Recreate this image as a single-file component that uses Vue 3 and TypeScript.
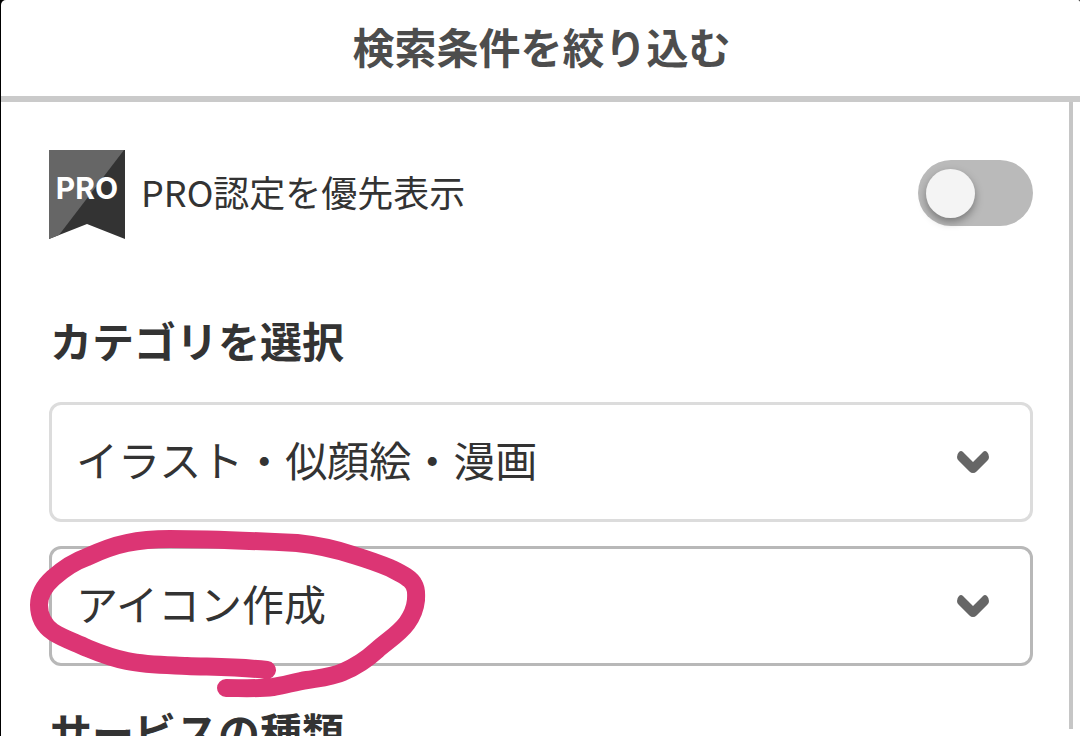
<script setup lang="ts">
import { ref } from 'vue'

interface Field {
  id: string
  label: string
  options: string[]
  active: boolean
}

const proFirst = ref(false)
const fields: Field[] = [
  { id: 'category', label: 'カテゴリ', options: ['イラスト・似顔絵・漫画'], active: false },
  { id: 'subcategory', label: 'サブカテゴリ', options: ['アイコン作成'], active: true },
]
</script>

<template>
  <div class="screen">
    <div class="dialog">
      <header class="header">
        <h1 class="title">検索条件を絞り込む</h1>
      </header>
      <div class="body">
        <main class="content">
          <div class="pro-row">
            <svg class="badge" viewBox="0 0 76 89" aria-hidden="true">
              <path d="M0 0H76V89L38 74L0 89Z" fill="#333" />
              <path d="M0 0H75L10 85L0 89Z" fill="#666" />
              <text x="38" y="49" text-anchor="middle" class="badge-text">PRO</text>
            </svg>
            <label class="pro-label" for="pro-first">PRO認定を優先表示</label>
            <input id="pro-first" v-model="proFirst" class="toggle" type="checkbox" role="switch" />
          </div>

          <h2 class="heading">カテゴリを選択</h2>
          <div class="fields">
            <div v-for="field in fields" :key="field.id" class="field" :class="{ active: field.active }">
              <select :id="field.id" class="select" :aria-label="field.label">
                <option v-for="option in field.options" :key="option">{{ option }}</option>
              </select>
              <svg class="chevron" viewBox="0 0 34 24" aria-hidden="true">
                <path
                  d="M5 1Q6 1 7 2L17 12L27 2Q28 1 29 1Q30 1 31 2Q33 4 33 7Q33 9 31.500 10.500L20.500 21.500Q19 23 17 23Q15 23 13.500 21.500L2.500 10.500Q1 9 1 7Q1 4 3 2Q4 1 5 1Z"
                  fill="#666"
                />
              </svg>
              <svg v-if="field.active" class="marker" viewBox="29 529 397 168" aria-hidden="true">
                <path
                  d="M267 670C240 667 214 667 187 666C165 665 146 665 127 661C112 658 99 653 87 648C74 642 62 638 53 632C43 625 39 616 39 605C39 595 43 587 53 578C62 570 73 562 87 557C100 551 112 546 127 543C141 540 155 539 170 539C213 539 255 541 297 543C316 545 335 549 353 555C366 559 378 563 390 568C400 573 411 578 414 585C417 590 416 595 416 600C415 610 412 616 407 623C399 634 387 641 377 650C366 660 355 667 343 672C332 677 319 678 307 680C295 682 285 685 273 687C258 689 242 688 226 688"
                />
              </svg>
            </div>
          </div>

          <h2 class="heading next">サービスの種類</h2>
        </main>
        <div class="scrollbar" aria-hidden="true"></div>
      </div>
    </div>
  </div>
</template>

<style>
body {
  margin: 0;
  background: #fff;
}
</style>

<style scoped>
* {
  box-sizing: border-box;
}

.screen {
  height: 100vh;
  padding-left: 1px;
  overflow: hidden;
  background: #000;
  color: #333;
  font-family: "Noto Sans CJK JP", sans-serif;
}

.dialog {
  display: flex;
  flex-direction: column;
  height: 100%;
  border-radius: 5px 2px 0 0;
  background: #fff;
}

.header {
  flex: none;
  padding: 16px 0 20px 2px;
  border-bottom: 6px solid #cacaca;
}

.title {
  margin: 0;
  color: #4d4d4d;
  font-size: 42px;
  font-weight: 700;
  line-height: 60px;
  text-align: center;
}

.body {
  display: flex;
  flex: 1;
  min-height: 0;
}

.content {
  flex: 1;
  min-width: 0;
  padding: 48px 36px 0 48px;
}

.scrollbar {
  width: 4px;
  margin: 0 7px 7px 0;
  background: #c6c6c6;
}

.pro-row {
  display: flex;
  align-items: flex-start;
}

.badge {
  flex: none;
  width: 76px;
  height: 89px;
}

.badge-text {
  fill: #fff;
  font-family: Inter, "Liberation Sans", sans-serif;
  font-size: 30px;
  font-weight: 700;
}

.pro-label {
  flex: 1;
  margin-left: 16px;
  font-size: 36px;
  line-height: 82px;
}

.toggle {
  flex: none;
  width: 115px;
  height: 66px;
  margin: 10px 0 0;
  padding: 9px 8px;
  border-radius: 33px;
  background: #bababa;
  appearance: none;
}

.toggle::before {
  display: block;
  width: 49px;
  height: 49px;
  border-radius: 50%;
  background: #f4f4f4;
  box-shadow: 0 4px 9px rgba(0, 0, 0, 0.35);
  content: "";
}

.toggle:checked {
  background: #666;
}

.toggle:checked::before {
  margin-left: 50px;
}

.heading {
  margin: 71px 0 32px;
  padding-left: 1px;
  font-size: 42px;
  font-weight: 700;
  line-height: 60px;
}

.heading.next {
  margin: 35px 0 0;
}

.fields {
  display: grid;
  gap: 24px;
}

.field {
  position: relative;
}

.select {
  display: block;
  width: 100%;
  height: 120px;
  padding: 0 90px 8px 24px;
  border: 3px solid #dcdcdc;
  border-radius: 12px;
  background: #fff;
  color: #333;
  font-family: inherit;
  font-size: 42px;
  appearance: none;
}

.active .select {
  border-color: #b8b8b8;
}

.chevron {
  position: absolute;
  top: 48px;
  right: 43px;
  width: 34px;
  height: 24px;
  pointer-events: none;
}

.marker {
  position: absolute;
  top: -17px;
  left: -20px;
  width: 397px;
  height: 168px;
  overflow: visible;
  fill: none;
  stroke: #dc3574;
  stroke-linecap: round;
  stroke-linejoin: round;
  stroke-width: 18px;
  pointer-events: none;
}
</style>
